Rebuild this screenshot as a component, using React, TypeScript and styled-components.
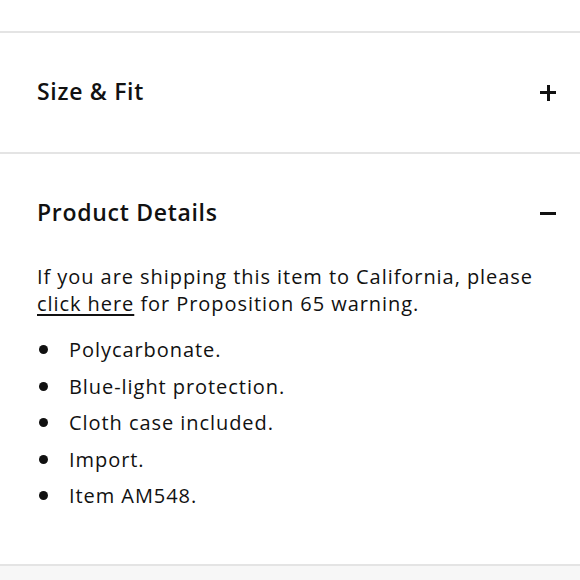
import React from "react";
import styled, { createGlobalStyle } from "styled-components";

const Global = createGlobalStyle`
  html, body { margin: 0; padding: 0; background: #fff; }
  body { font-family: "Open Sans", "Noto Sans", sans-serif; color: #111; }
`;

const Page = styled.div`
  width: 580px;
  height: 580px;
  overflow: hidden;
  display: flex;
  flex-direction: column;
`;

const TopSpace = styled.div`
  height: 31px;
  border-bottom: 2px solid #e4e4e4;
`;

const Section = styled.section`
  border-bottom: 2px solid #e4e4e4;
  padding: 0 24px 0 37px;
`;

const Header = styled.div`
  height: 119px;
  display: flex;
  align-items: center;
  justify-content: space-between;
`;

const Title = styled.h2`
  margin: 0 0 3px;
  font-size: 23px;
  line-height: 30px;
  font-weight: 600;
  letter-spacing: 0.7px;
  color: #111;
`;

const Toggle = styled.span`
  width: 16px;
  height: 16px;
  position: relative;
  display: block;
  &::before, &::after {
    content: "";
    position: absolute;
    background: #111;
  }
  &::before { left: 0; right: 0; top: 6.5px; height: 3px; }
`;

const PlusIcon = styled(Toggle)`
  &::after { top: 0; bottom: 0; left: 6.5px; width: 3px; }
`;

const Body = styled.div`
  padding: 0 0 55px;
  margin-top: -10px;
`;

const Para = styled.p`
  margin: 0 0 19px;
  font-size: 20px;
  line-height: 27px;
  letter-spacing: 0.94px;
`;

const Link = styled.a`
  color: inherit;
  text-decoration: underline;
  text-decoration-thickness: 1.5px;
  text-underline-offset: 3px;
`;

const List = styled.ul`
  margin: 0;
  padding: 0;
  list-style: none;
  display: flex;
  flex-direction: column;
  gap: 9.5px;
`;

const Item = styled.li`
  display: flex;
  align-items: center;
  gap: 21px;
  font-size: 20px;
  line-height: 27px;
  letter-spacing: 0.94px;
  &::before {
    content: "";
    width: 9px;
    height: 9px;
    border-radius: 50%;
    background: #111;
    margin-left: 2px;
  }
`;

const Footer = styled.div`
  flex: 1;
  background: #f7f7f7;
`;

const items = [
  "Polycarbonate.",
  "Blue-light protection.",
  "Cloth case included.",
  "Import.",
  "Item AM548.",
];

export default function App() {
  return (
    <Page>
      <Global />
      <TopSpace />
      <Section>
        <Header>
          <Title>Size &amp; Fit</Title>
          <PlusIcon />
        </Header>
      </Section>
      <Section>
        <Header>
          <Title>Product Details</Title>
          <Toggle />
        </Header>
        <Body>
          <Para>
            If you are shipping this item to California, please
            <br />
            <Link href="#">click here</Link> for Proposition 65 warning.
          </Para>
          <List>
            {items.map((t) => (
              <Item key={t}>{t}</Item>
            ))}
          </List>
        </Body>
      </Section>
      <Footer />
    </Page>
  );
}
